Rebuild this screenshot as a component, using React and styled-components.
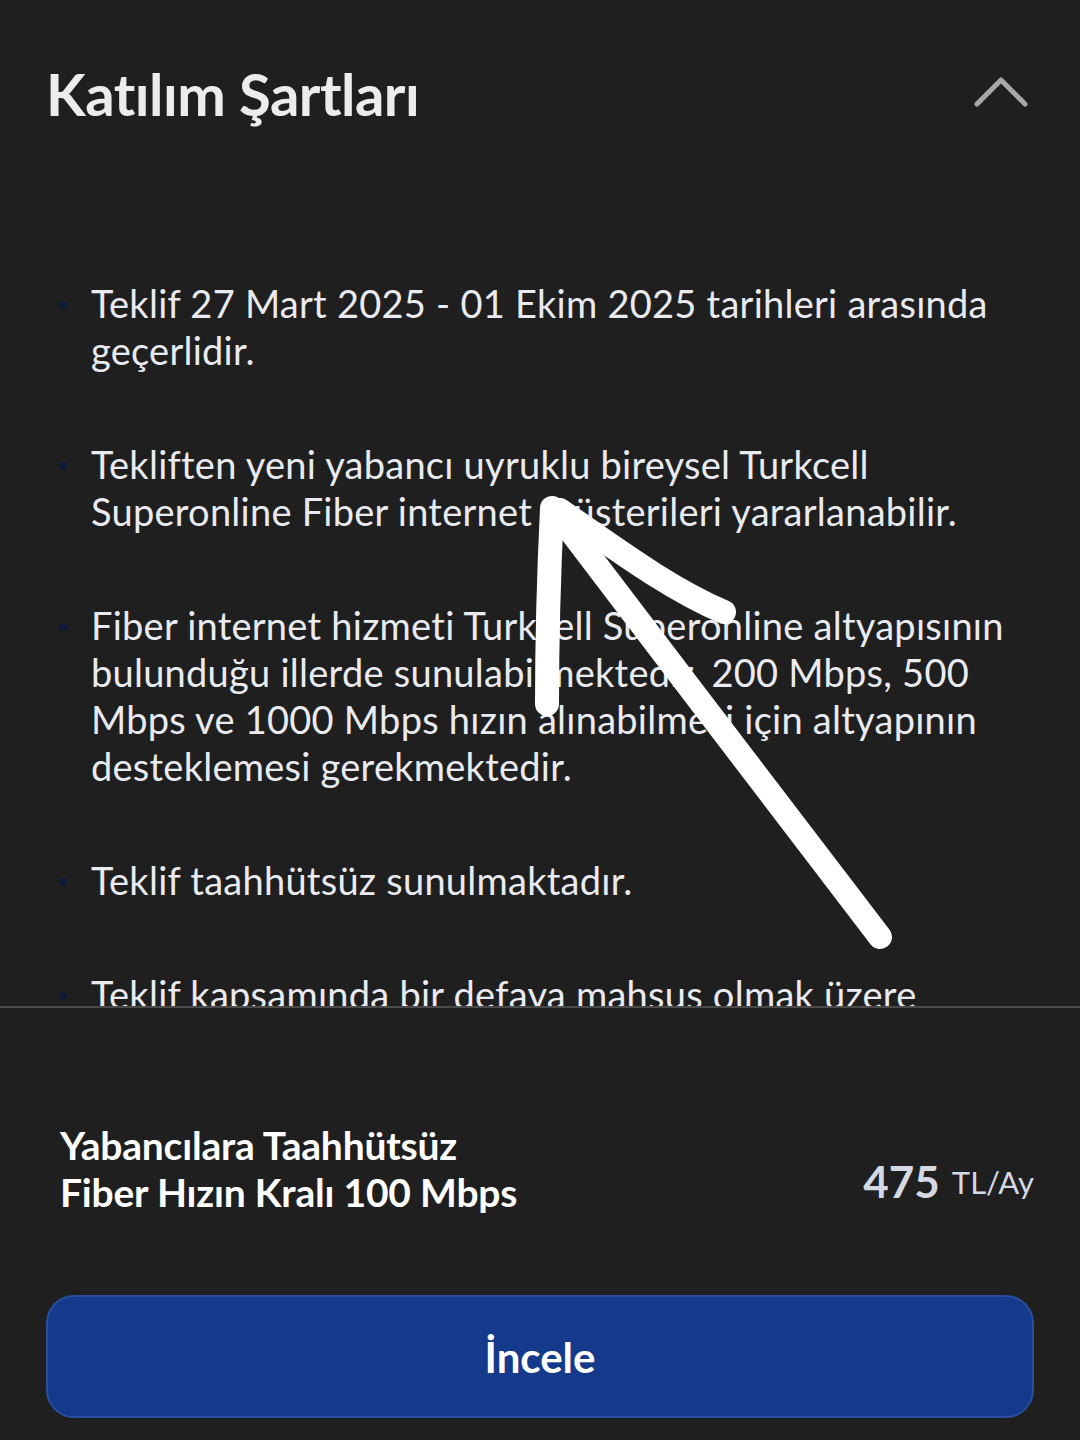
import React from "react";
import styled, { createGlobalStyle } from "styled-components";

const GlobalStyle = createGlobalStyle`
  html, body {
    margin: 0;
    padding: 0;
    background: #1f1f1f;
  }
  * {
    box-sizing: border-box;
  }
`;

const terms = [
  ["Teklif 27 Mart 2025 - 01 Ekim 2025 tarihleri arasında", "geçerlidir."],
  [
    "Tekliften yeni yabancı uyruklu bireysel Turkcell",
    "Superonline Fiber internet müşterileri yararlanabilir.",
  ],
  [
    "Fiber internet hizmeti Turkcell Superonline altyapısının",
    "bulunduğu illerde sunulabilmektedir. 200 Mbps, 500",
    "Mbps ve 1000 Mbps hızın alınabilmesi için altyapının",
    "desteklemesi gerekmektedir.",
  ],
  ["Teklif taahhütsüz sunulmaktadır."],
  [
    "Teklif kapsamında bir defaya mahsus olmak üzere",
    "kurulum ücreti alınmamaktadır.",
  ],
];

export default function App() {
  return (
    <>
      <GlobalStyle />
      <Page>
        <Header>
          <Title>Katılım Şartları</Title>
          <Chevron viewBox="0 0 54 32">
            <polyline points="3,28 27,4 51,28" />
          </Chevron>
        </Header>

        <Scroll>
          <List>
            {terms.map((lines, i) => (
              <Item key={i}>
                <Dot />
                <ItemText>
                  {lines.map((line, j) => (
                    <Line key={j}>{line}</Line>
                  ))}
                </ItemText>
              </Item>
            ))}
          </List>
        </Scroll>

        <Footer>
          <Offer>
            <OfferName>
              <Line>Yabancılara Taahhütsüz</Line>
              <Line>Fiber Hızın Kralı 100 Mbps</Line>
            </OfferName>
            <Price>
              <Amount>475</Amount>
              <Unit>TL/Ay</Unit>
            </Price>
          </Offer>
          <Button>İncele</Button>
        </Footer>

        <Arrow viewBox="0 0 1080 1440">
          <path d="M 880 937 C 780 805, 660 650, 556 512" />
          <path d="M 552 508 C 549 570, 547 640, 547 704" />
          <path d="M 560 510 C 615 548, 668 588, 724 612" />
        </Arrow>
      </Page>
    </>
  );
}

const Page = styled.div`
  position: relative;
  width: 1080px;
  height: 1440px;
  background: #1f1f1f;
  display: flex;
  flex-direction: column;
  font-family: Lato, "Noto Sans", sans-serif;
  overflow: hidden;
`;

const Header = styled.div`
  height: 190px;
  padding: 0 52px 4px 46px;
  display: flex;
  align-items: center;
  justify-content: space-between;
`;

const Title = styled.h1`
  margin: 0;
  font-size: 58px;
  font-weight: 700;
  color: #ececec;
  letter-spacing: -0.5px;
`;

const Chevron = styled.svg`
  width: 54px;
  height: 32px;
  margin-top: -2px;
  fill: none;
  stroke: #a8a8a8;
  stroke-width: 5;
  stroke-linecap: round;
  stroke-linejoin: round;
`;

const Scroll = styled.div`
  height: 818px;
  overflow: hidden;
  border-bottom: 2px solid #4b4b4b;
`;

const List = styled.ul`
  margin: 0;
  padding: 90px 0 0 59px;
  list-style: none;
  display: flex;
  flex-direction: column;
  gap: 67px;
`;

const Item = styled.li`
  display: flex;
  align-items: flex-start;
  gap: 24px;
`;

const Dot = styled.span`
  flex: none;
  width: 8px;
  height: 8px;
  margin-top: 21px;
  border-radius: 50%;
  background: #0f1a38;
`;

const ItemText = styled.div`
  font-size: 38px;
  line-height: 47px;
  color: #e9ebf1;
  letter-spacing: 0.25px;
`;

const Line = styled.span`
  display: block;
  white-space: nowrap;
`;

const Footer = styled.div`
  padding: 114px 46px 20px;
  display: flex;
  flex-direction: column;
  gap: 79px;
`;

const Offer = styled.div`
  padding: 0 0 0 14px;
  display: flex;
  align-items: center;
  justify-content: space-between;
`;

const OfferName = styled.div`
  font-size: 39px;
  line-height: 47px;
  font-weight: 700;
  color: #ffffff;
  letter-spacing: -0.2px;
`;

const Price = styled.div`
  display: flex;
  align-items: baseline;
  gap: 12px;
  margin-top: 24px;
`;

const Amount = styled.span`
  font-size: 44px;
  font-weight: 700;
  color: #d4d9e3;
`;

const Unit = styled.span`
  font-size: 31px;
  color: #d4d9e3;
  position: relative;
  top: -4px;
`;

const Button = styled.button`
  height: 123px;
  width: 100%;
  border: 2px solid #2a4e9e;
  border-radius: 28px;
  background: #163a8b;
  color: #ffffff;
  font-family: Lato, "Noto Sans", sans-serif;
  font-size: 42px;
  font-weight: 700;
  cursor: pointer;
`;

const Arrow = styled.svg`
  position: absolute;
  inset: 0;
  width: 1080px;
  height: 1440px;
  pointer-events: none;
  fill: none;
  stroke: #ffffff;
  stroke-width: 24;
  stroke-linecap: round;
  stroke-linejoin: round;
`;
